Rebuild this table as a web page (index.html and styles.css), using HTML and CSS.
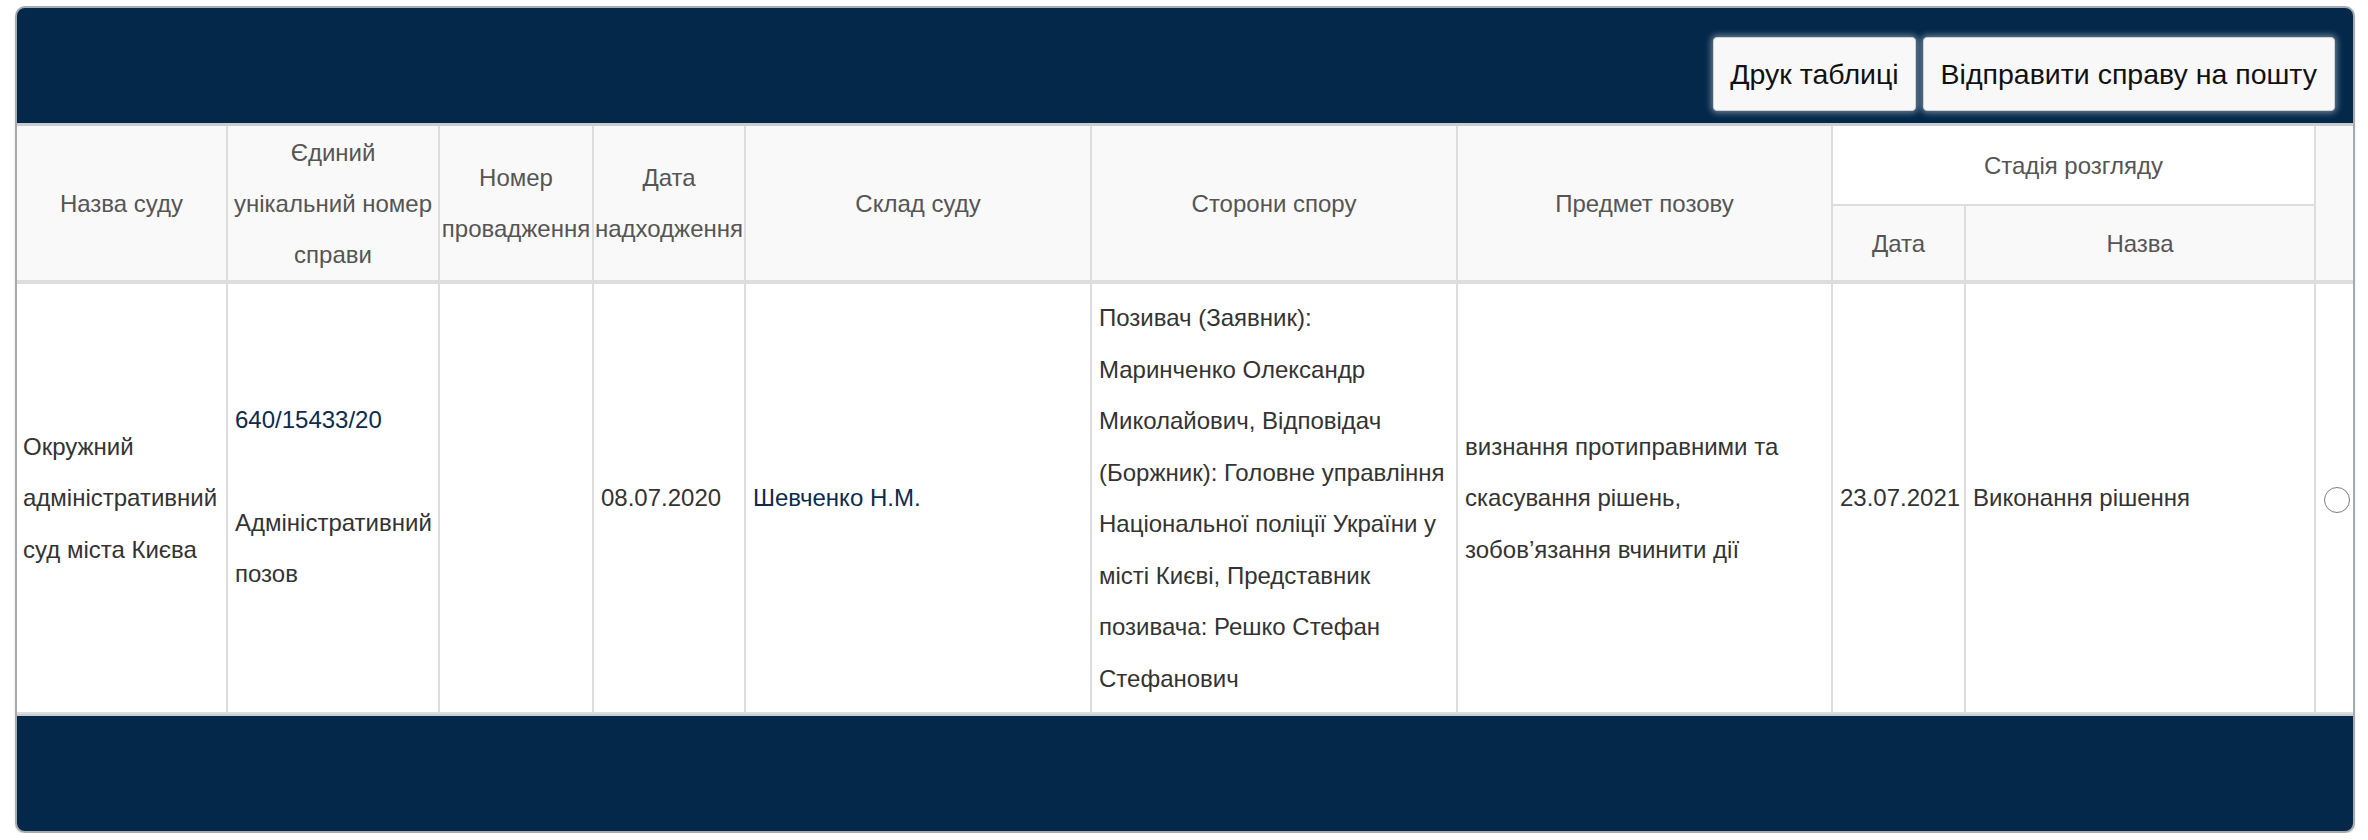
FILE: index.html
```html
<!DOCTYPE html>
<html lang="uk">
<head>
<meta charset="utf-8">
<title>Справи</title>
<link rel="stylesheet" href="styles.css">
</head>
<body>
<div class="panel">
  <div class="toolbar">
    <button class="btn btn-print" type="button">Друк таблиці</button>
    <button class="btn btn-mail" type="button">Відправити справу на пошту</button>
  </div>
  <table class="cases">
    <colgroup>
      <col class="c-court">
      <col class="c-num">
      <col class="c-proc">
      <col class="c-date">
      <col class="c-judges">
      <col class="c-parties">
      <col class="c-subject">
      <col class="c-sdate">
      <col class="c-sname">
      <col class="c-radio">
    </colgroup>
    <thead>
      <tr class="h1">
        <th rowspan="2">Назва суду</th>
        <th rowspan="2">Єдиний унікальний номер справи</th>
        <th rowspan="2">Номер провадження</th>
        <th rowspan="2">Дата надходження</th>
        <th rowspan="2">Склад суду</th>
        <th rowspan="2">Сторони спору</th>
        <th rowspan="2">Предмет позову</th>
        <th colspan="2" class="stage">Стадія розгляду</th>
        <th rowspan="2" class="last"></th>
      </tr>
      <tr class="h2">
        <th>Дата</th>
        <th>Назва</th>
      </tr>
    </thead>
    <tbody>
      <tr>
        <td>Окружний адміністративний суд міста Києва</td>
        <td>
          <div class="case-no"><a href="#">640/15433/20</a></div>
          <div>Адміністративний позов</div>
        </td>
        <td></td>
        <td>08.07.2020</td>
        <td><a href="#">Шевченко Н.М.</a></td>
        <td>Позивач (Заявник): Маринченко Олександр Миколайович, Відповідач (Боржник): Головне управління Національної поліції України у місті Києві, Представник позивача: Решко Стефан Стефанович</td>
        <td>визнання протиправними та скасування рішень, зобов’язання вчинити дії</td>
        <td>23.07.2021</td>
        <td>Виконання рішення</td>
        <td class="last radio-cell"><span class="radio"></span></td>
      </tr>
    </tbody>
  </table>
  <div class="footer"></div>
</div>
</body>
</html>
```
FILE: styles.css
```css
html, body {
  margin: 0;
  padding: 0;
  background: #ffffff;
}
body {
  padding: 6px 0 0 15px;
  font-family: "Liberation Sans", Arial, Helvetica, sans-serif;
  color: #333333;
}
.panel {
  width: 2340px;
  box-sizing: border-box;
  border: 2px solid #a7abb0;
  border-radius: 10px;
  background: #03284a;
  overflow: hidden;
  box-shadow: 0 1px 2px rgba(0, 0, 0, 0.15);
}
.toolbar {
  height: 115px;
  box-sizing: border-box;
  display: flex;
  justify-content: flex-end;
  align-items: flex-end;
  gap: 7px;
  padding: 0 18px 12px 0;
}
.btn {
  font-family: "Liberation Sans", Arial, Helvetica, sans-serif;
  font-size: 28.5px;
  line-height: 32px;
  color: #111111;
  background: #f8f8f8;
  border: 1px solid #d0d0d0;
  border-radius: 4px;
  padding: 20px 18px;
  box-shadow: 0 0 6px 2px rgba(190, 198, 208, 0.55);
}
.btn-print {
  padding-left: 16px;
  padding-right: 16px;
}
.btn-mail {
  padding-left: 17px;
  padding-right: 17px;
}
.cases {
  width: 100%;
  table-layout: fixed;
  border-collapse: separate;
  border-spacing: 0;
  background: #ffffff;
  border-top: 3px solid #c9ccd0;
  font-size: 24px;
}
.c-court { width: 211px; }
.c-num { width: 212px; }
.c-proc { width: 154px; }
.c-date { width: 152px; }
.c-judges { width: 346px; }
.c-parties { width: 366px; }
.c-subject { width: 375px; }
.c-sdate { width: 133px; }
.c-sname { width: 350px; }
.c-radio { width: 37px; }
.cases th,
.cases td {
  box-sizing: border-box;
  border-right: 2px solid #dddddd;
  border-bottom: 2px solid #dddddd;
  vertical-align: middle;
}
.cases th.last,
.cases td.last {
  border-right: none;
}
.cases th {
  background: #f9f9f9;
  color: #555555;
  font-weight: normal;
  text-align: center;
  line-height: 51px;
  padding: 0;
}
.cases th.stage {
  background: #ffffff;
}
.cases tr.h1 { height: 80px; }
.cases tr.h2 { height: 78px; }
.cases tr.h1 th[rowspan],
.cases tr.h2 th {
  border-bottom-width: 4px;
}
.cases td {
  text-align: left;
  line-height: 51.5px;
  padding: 8px 6px 8px 7px;
  color: #333333;
}
.cases td:first-child {
  padding-left: 6px;
}
.cases a {
  color: #0b2b4f;
  text-decoration: none;
}
.case-no {
  margin-bottom: 51.5px;
  margin-top: -3px;
}
.cases td.radio-cell {
  padding: 0;
  text-align: center;
}
.radio {
  display: inline-block;
  width: 26px;
  height: 26px;
  box-sizing: border-box;
  border: 1.5px solid #7d7d7d;
  border-radius: 50%;
  vertical-align: middle;
  background: #ffffff;
  margin-left: 4px;
}
.footer {
  height: 117px;
  border-top: 2px solid #c9ccd0;
  box-sizing: border-box;
}
```
